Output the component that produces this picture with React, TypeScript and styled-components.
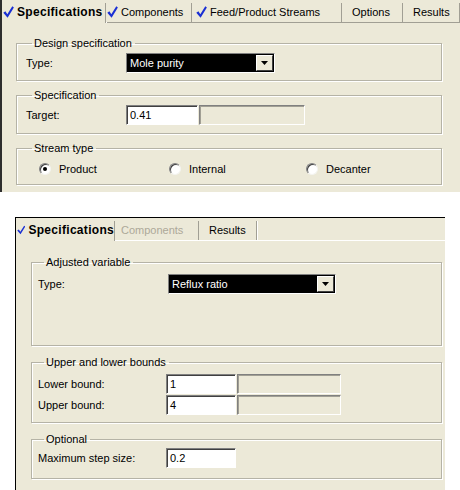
import styled, { createGlobalStyle } from "styled-components";

const GlobalStyle = createGlobalStyle`
  body {
    margin: 0;
    background: #ffffff;
    font-family: "Liberation Sans", Arial, sans-serif;
    font-size: 11px;
    color: #000;
  }
`;

const Page = styled.div`
  width: 460px;
  height: 490px;
  overflow: hidden;
`;

const Panel = styled.div<{ $ml: number; $mt: number; $w: number; $h: number; $frame: string }>`
  margin-left: ${(p) => p.$ml}px;
  margin-top: ${(p) => p.$mt}px;
  width: ${(p) => p.$w}px;
  height: ${(p) => p.$h}px;
  background: #ece9d8;
  box-sizing: border-box;
  ${(p) => p.$frame}
  display: flex;
  flex-direction: column;
  overflow: hidden;
`;

const TabStrip = styled.div<{ $line: string }>`
  display: flex;
  align-items: flex-end;
  height: 22px;
  flex-shrink: 0;
  border-bottom: 1px solid ${(p) => p.$line};
`;

const Tab = styled.div<{ $w: number; $pl: number; $selected?: boolean; $disabled?: boolean }>`
  display: flex;
  align-items: center;
  gap: 3px;
  box-sizing: border-box;
  width: ${(p) => p.$w}px;
  flex-shrink: 0;
  height: ${(p) => (p.$selected ? 20 : 19)}px;
  margin-bottom: ${(p) => (p.$selected ? -1 : 0)}px;
  padding-left: ${(p) => p.$pl}px;
  padding-bottom: 2px;
  background: #ece9d8;
  border-right: 1px solid #a19f94;
  box-shadow: 1px 0 0 #ffffff;
  font-size: ${(p) => (p.$selected ? 12 : 11)}px;
  font-weight: ${(p) => (p.$selected ? 700 : 400)};
  letter-spacing: ${(p) => (p.$selected ? 0.3 : 0)}px;
  color: ${(p) => (p.$disabled ? "#aca899" : "#000")};
  white-space: nowrap;
`;

const Body = styled.div<{ $pad: string; $gap: number }>`
  display: flex;
  flex-direction: column;
  gap: ${(p) => p.$gap}px;
  padding: ${(p) => p.$pad};
`;

const Group = styled.fieldset<{ $pad: string }>`
  margin: 0;
  padding: ${(p) => p.$pad};
  border: 1px solid #b5b3a6;
  box-shadow: 1px 1px 0 #ffffff, inset 1px 1px 0 #ffffff;
  min-inline-size: 0;
  display: flex;
  flex-direction: column;
  gap: 1px;
`;

const Legend = styled.legend`
  margin-left: 6px;
  padding: 0 3px 0 2px;
  font-size: 11px;
  line-height: 13px;
  color: #000;
`;

const Row = styled.div`
  display: flex;
  align-items: center;
  height: 20px;
`;

const Label = styled.span<{ $w: number }>`
  width: ${(p) => p.$w}px;
  flex-shrink: 0;
`;

const Select = styled.div<{ $w: number }>`
  display: flex;
  align-items: center;
  box-sizing: border-box;
  width: ${(p) => p.$w}px;
  height: 20px;
  background: #000;
  border: 1px solid;
  border-color: #808080 #ffffff #ffffff #808080;
  color: #fff;
`;

const SelectText = styled.span`
  flex: 1;
  padding-left: 3px;
`;

const DropButton = styled.span`
  display: flex;
  align-items: center;
  justify-content: center;
  box-sizing: border-box;
  width: 17px;
  height: 16px;
  margin-right: 1px;
  background: #ece9d8;
  border: 1px solid;
  border-color: #ffffff #404040 #404040 #ffffff;
`;

const Field = styled.div<{ $w: number; $off?: boolean }>`
  display: flex;
  align-items: center;
  box-sizing: border-box;
  width: ${(p) => p.$w}px;
  height: 20px;
  padding-left: 3px;
  background: ${(p) => (p.$off ? "#ece9d8" : "#ffffff")};
  border: 1px solid;
  border-color: #808080 #ffffff #ffffff #808080;
  box-shadow: inset 1px 1px 0 ${(p) => (p.$off ? "#a19f94" : "#404040")};
  margin-right: 1px;
`;

const RadioRow = styled.div`
  display: flex;
  align-items: center;
  height: 20px;
  padding-left: 13px;
`;

const RadioItem = styled.label<{ $w: number }>`
  display: flex;
  align-items: center;
  gap: 8px;
  width: ${(p) => p.$w}px;
  flex-shrink: 0;
`;

const RadioDot = styled.span<{ $on?: boolean }>`
  display: flex;
  align-items: center;
  justify-content: center;
  box-sizing: border-box;
  width: 12px;
  height: 12px;
  border-radius: 50%;
  background: #ffffff;
  border: 1px solid;
  border-color: #808080 #f4f4f0 #f4f4f0 #808080;
  box-shadow: inset 1px 1px 0 #404040;

  &::after {
    content: "";
    display: ${(p) => (p.$on ? "block" : "none")};
    width: 4px;
    height: 4px;
    border-radius: 50%;
    background: #000;
  }
`;

function Check() {
  return (
    <svg width="11" height="12" viewBox="0 0 11 12">
      <path d="M0.3 6.8 L2.4 5.2 L4.3 8.2 L9.3 0.3 L10.9 1.4 L4.6 11.7 Z" fill="#1a2fd4" />
    </svg>
  );
}

function Arrow() {
  return (
    <svg width="7" height="4" viewBox="0 0 7 4">
      <path d="M0 0 L7 0 L3.5 4 Z" fill="#000" />
    </svg>
  );
}

function Combo({ w, value }: { w: number; value: string }) {
  return (
    <Select $w={w}>
      <SelectText>{value}</SelectText>
      <DropButton>
        <Arrow />
      </DropButton>
    </Select>
  );
}

export default function App() {
  return (
    <Page>
      <GlobalStyle />
      <Panel $ml={0} $mt={0} $w={460} $h={192} $frame="border-left: 2px solid #2e2e2e;">
        <TabStrip $line="#a19f94">
          <Tab $w={104} $pl={1} $selected>
            <Check />
            Specifications
          </Tab>
          <Tab $w={86} $pl={1}>
            <Check />
            Components
          </Tab>
          <Tab $w={150} $pl={4}>
            <Check />
            Feed/Product Streams
          </Tab>
          <Tab $w={61} $pl={10}>Options</Tab>
          <Tab $w={57} $pl={10}>Results</Tab>
        </TabStrip>
        <Body $pad="14px 18px 0 14px" $gap={8}>
          <Group $pad="3px 8px 7px 9px">
            <Legend>Design specification</Legend>
            <Row>
              <Label $w={100}>Type:</Label>
              <Combo w={149} value="Mole purity" />
            </Row>
          </Group>
          <Group $pad="3px 8px 8px 9px">
            <Legend>Specification</Legend>
            <Row>
              <Label $w={100}>Target:</Label>
              <Field $w={72}>0.41</Field>
              <Field $w={106} $off />
            </Row>
          </Group>
          <Group $pad="4px 8px 5px 9px">
            <Legend>Stream type</Legend>
            <RadioRow>
              <RadioItem $w={130}>
                <RadioDot $on />
                Product
              </RadioItem>
              <RadioItem $w={137}>
                <RadioDot />
                Internal
              </RadioItem>
              <RadioItem $w={120}>
                <RadioDot />
                Decanter
              </RadioItem>
            </RadioRow>
          </Group>
        </Body>
      </Panel>

      <Panel
        $ml={15}
        $mt={25}
        $w={430}
        $h={273}
        $frame="border-left: 1px solid #000; border-top: 1px solid #000;"
      >
        <TabStrip $line="#ffffff">
          <Tab $w={99} $pl={1} $selected>
            <Check />
            Specifications
          </Tab>
          <Tab $w={84} $pl={6} $disabled>
            Components
          </Tab>
          <Tab $w={58} $pl={10}>Results</Tab>
        </TabStrip>
        <Body $pad="15px 3px 0 15px" $gap={10}>
          <Group $pad="5px 8px 51px 6px">
            <Legend>Adjusted variable</Legend>
            <Row>
              <Label $w={130}>Type:</Label>
              <Combo w={168} value="Reflux ratio" />
            </Row>
          </Group>
          <Group $pad="5px 8px 7px 6px">
            <Legend>Upper and lower bounds</Legend>
            <Row>
              <Label $w={128}>Lower bound:</Label>
              <Field $w={70}>1</Field>
              <Field $w={104} $off />
            </Row>
            <Row>
              <Label $w={128}>Upper bound:</Label>
              <Field $w={70}>4</Field>
              <Field $w={104} $off />
            </Row>
          </Group>
          <Group $pad="2px 8px 10px 6px">
            <Legend>Optional</Legend>
            <Row>
              <Label $w={128}>Maximum step size:</Label>
              <Field $w={70}>0.2</Field>
            </Row>
          </Group>
        </Body>
      </Panel>
    </Page>
  );
}
